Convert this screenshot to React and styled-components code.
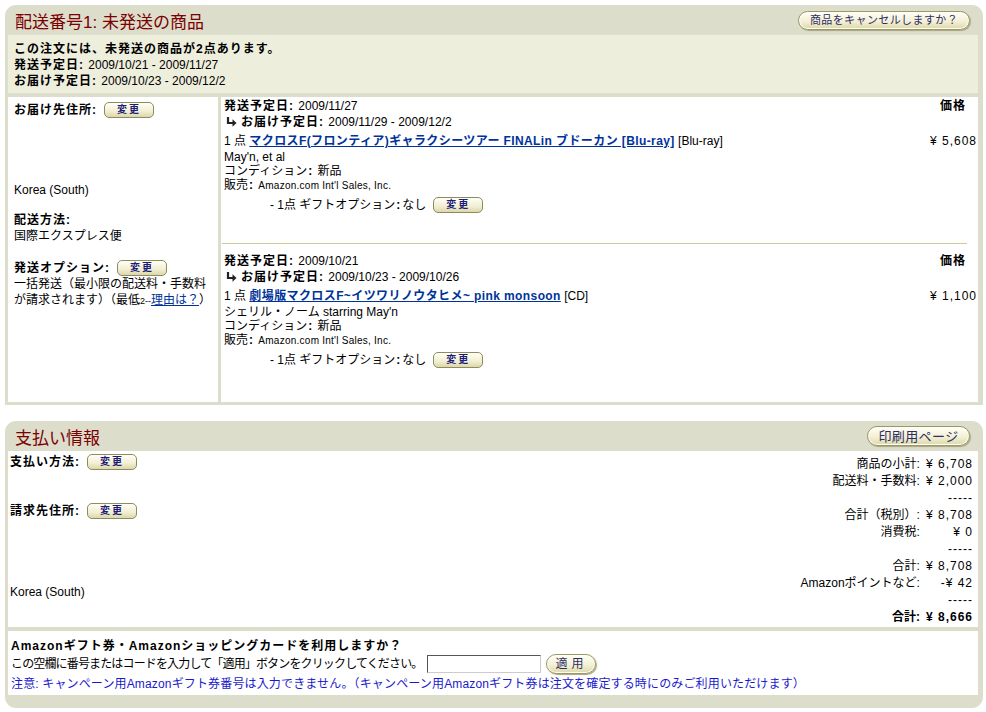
import React from "react";
import styled, { createGlobalStyle } from "styled-components";

const GlobalStyle = createGlobalStyle`
  body {
    margin: 0;
    background: #fff;
    font-family: "Liberation Sans", "Noto Sans CJK JP", sans-serif;
    font-size: 12px;
    color: #000;
  }
`;

const items = [
  {
    ship: "2009/11/27",
    deliver: "2009/11/29 - 2009/12/2",
    title: "マクロスF(フロンティア)ギャラクシーツアー FINALin ブドーカン [Blu-ray]",
    format: "[Blu-ray]",
    price: "¥ 5,608",
    artist: "May'n, et al",
  },
  {
    ship: "2009/10/21",
    deliver: "2009/10/23 - 2009/10/26",
    title: "劇場版マクロスF~イツワリノウタヒメ~ pink monsoon",
    format: "[CD]",
    price: "¥ 1,100",
    artist: "シェリル・ノーム starring May'n",
  },
];

const totals = [
  { label: "商品の小計:", value: "¥ 6,708" },
  { label: "配送料・手数料:", value: "¥ 2,000" },
  { label: "", value: "-----" },
  { label: "合計（税別）:", value: "¥ 8,708" },
  { label: "消費税:", value: "¥ 0" },
  { label: "", value: "-----" },
  { label: "合計:", value: "¥ 8,708" },
  { label: "Amazonポイントなど:", value: "-¥ 42" },
  { label: "", value: "-----" },
  { label: "合計:", value: "¥ 8,666", strong: true },
];

const Arrow = () => (
  <svg width="11" height="10" viewBox="0 0 11 10">
    <path d="M2 0v6h5" stroke="#222" strokeWidth="2.2" fill="none" />
    <path d="M6.5 2.2l4 3.8-4 3.8z" fill="#222" />
  </svg>
);

const App = () => {
  return (
    <>
      <GlobalStyle />
      <Page>
        <Panel>
          <PanelHeader>
            <PanelTitle>配送番号1: 未発送の商品</PanelTitle>
            <PillButton $w={172} $h={19} $fs={11}>
              商品をキャンセルしますか？
            </PillButton>
          </PanelHeader>
          <Info>
            <B>この注文には、未発送の商品が2点あります。</B>
            <div>
              <B>発送予定日: </B>2009/10/21 - 2009/11/27
            </div>
            <div>
              <B>お届け予定日: </B>2009/10/23 - 2009/12/2
            </div>
          </Info>
          <ShipBody>
            <LeftCol>
              <LabelRow>
                <B>お届け先住所:</B>
                <SmallButton>変更</SmallButton>
              </LabelRow>
              <Address>Korea (South)</Address>
              <Field $gap={14}>
                <B>配送方法:</B>
                <div>国際エクスプレス便</div>
              </Field>
              <Field $gap={16}>
                <LabelRow>
                  <B>発送オプション:</B>
                  <SmallButton>変更</SmallButton>
                </LabelRow>
                <NoWrap>一括発送（最小限の配送料・手数料</NoWrap>
                <NoWrap>
                  が請求されます）（最低<Tiny>2--</Tiny>
                  <PlainLink href="#">理由は？</PlainLink>）
                </NoWrap>
              </Field>
            </LeftCol>
            <RightCol>
              {items.map((item, i) => (
                <Item key={item.ship}>
                  {i > 0 && <Divider />}
                  <ItemHead>
                    <span>
                      <B>発送予定日: </B>
                      {item.ship}
                    </span>
                    <PriceHead>価格</PriceHead>
                  </ItemHead>
                  <DeliveryRow>
                    <Arrow />
                    <span>
                      <B>お届け予定日: </B>
                      {item.deliver}
                    </span>
                  </DeliveryRow>
                  <ProductRow>
                    <span>
                      1 点 <TitleLink href="#">{item.title}</TitleLink>{" "}
                      {item.format}
                    </span>
                    <Money>{item.price}</Money>
                  </ProductRow>
                  <Detail $first>{item.artist}</Detail>
                  <Detail>
                    コンディション<Colon>:</Colon> 新品
                  </Detail>
                  <Detail>
                    販売<Colon>:</Colon> <Seller>Amazon.com Int'l Sales, Inc.</Seller>
                  </Detail>
                  <GiftRow>
                    - 1点 ギフトオプション<Colon>:</Colon>なし
                    <SmallButton>変更</SmallButton>
                  </GiftRow>
                </Item>
              ))}
            </RightCol>
          </ShipBody>
        </Panel>

        <Panel $roundBottom>
          <PanelHeader>
            <PanelTitle>支払い情報</PanelTitle>
            <PillButton $w={103} $h={20} $fs={13}>
              印刷用ページ
            </PillButton>
          </PanelHeader>
          <PayBody>
            <PayLeft>
              <LabelRow>
                <B>支払い方法:</B>
                <SmallButton>変更</SmallButton>
              </LabelRow>
              <LabelRow $gap={33}>
                <B>請求先住所:</B>
                <SmallButton>変更</SmallButton>
              </LabelRow>
              <BillAddress>Korea (South)</BillAddress>
            </PayLeft>
            <Totals>
              {totals.map((t, i) => (
                <React.Fragment key={i}>
                  <TotalLabel $strong={t.strong}>{t.label}</TotalLabel>
                  <TotalValue $strong={t.strong}>{t.value}</TotalValue>
                </React.Fragment>
              ))}
            </Totals>
          </PayBody>
          <GiftBox>
            <B>Amazonギフト券・Amazonショッピングカードを利用しますか？</B>
            <CodeRow>
              <CodeText>
                この空欄に番号またはコードを入力して「適用」ボタンをクリックしてください。
              </CodeText>
              <CodeInput type="text" />
              <PillButton $w={50} $h={20} $fs={12} $spacing={4}>
                適用
              </PillButton>
            </CodeRow>
            <Note>
              注意: キャンペーン用Amazonギフト券番号は入力できません。（キャンペーン用Amazonギフト券は注文を確定する時にのみご利用いただけます）
            </Note>
          </GiftBox>
        </Panel>
      </Page>
    </>
  );
};

export default App;

/**
 *
 * STYLED COMPONENTS
 *
 **/
const Page = styled.div`
  width: 978px;
  padding: 5px 3px 4px 5px;
  display: flex;
  flex-direction: column;
  gap: 16px;
`;

const Panel = styled.section`
  background: #ddddcc;
  border-radius: ${(p) => (p.$roundBottom ? "11px" : "11px 11px 0 0")};
  padding: 0 5px ${(p) => (p.$roundBottom ? "13px" : "3px")} 3px;
`;

const PanelHeader = styled.div`
  height: 30px;
  display: flex;
  align-items: center;
  justify-content: space-between;
  padding: 0 8px 0 7px;
`;

const PanelTitle = styled.h2`
  margin: 0;
  font-size: 17px;
  font-weight: normal;
  color: #7b0000;
`;

const PillButton = styled.button`
  width: ${(p) => p.$w}px;
  height: ${(p) => p.$h}px;
  padding: 0;
  border: 1px solid #9a986a;
  border-radius: 11px;
  background: linear-gradient(#fffff6, #f3f0d6 55%, #ddd8aa);
  box-shadow: 1px 1px 1px #a9a67c, inset 0 0 0 1px #fffef2;
  font-family: inherit;
  font-size: ${(p) => p.$fs}px;
  letter-spacing: ${(p) => p.$spacing ?? 0.4}px;
  color: #2d2d66;
  line-height: 1;
  cursor: pointer;
`;

const SmallButton = styled.button`
  width: 50px;
  height: 16px;
  margin-left: 7px;
  padding: 0;
  border: 1px solid #8e8c5e;
  border-radius: 5px;
  background: linear-gradient(#fffff6, #f1eed2 60%, #dcd7aa);
  font-family: inherit;
  font-size: 10px;
  font-weight: bold;
  letter-spacing: 2px;
  line-height: 1;
  color: #1c1c7a;
  cursor: pointer;
`;

const B = styled.b`
  font-weight: bold;
  letter-spacing: 1px;
`;

const Colon = styled.b`
  font-weight: bold;
  padding: 0 2px 0 1px;
`;

const Info = styled.div`
  background: #eeeedd;
  padding: 6px 6px 4px;
  line-height: 16px;
  display: flex;
  flex-direction: column;
`;

const ShipBody = styled.div`
  margin-top: 4px;
  height: 305px;
  display: grid;
  grid-template-columns: 210px 1fr;
  column-gap: 3px;
`;

const LeftCol = styled.div`
  background: #fff;
  padding: 5px 6px 0;
  line-height: 16px;
`;

const LabelRow = styled.div`
  display: flex;
  align-items: center;
  height: 16px;
  margin-top: ${(p) => p.$gap || 0}px;
`;

const Address = styled.div`
  padding-top: 64px;
`;

const Field = styled.div`
  margin-top: ${(p) => p.$gap}px;
`;

const NoWrap = styled.div`
  white-space: nowrap;
`;

const Tiny = styled.span`
  font-size: 9px;
`;

const PlainLink = styled.a`
  color: #003399;
  text-decoration: underline;
`;

const RightCol = styled.div`
  background: #fff;
  padding: 1px 1px 0 3px;
  line-height: 16px;
`;

const Item = styled.div`
  display: flex;
  flex-direction: column;
`;

const Divider = styled.hr`
  margin: 28px 10px 9px -2px;
  border: 0;
  border-top: 1px solid #cccc99;
`;

const ItemHead = styled.div`
  display: flex;
  justify-content: space-between;
`;

const PriceHead = styled.b`
  font-weight: bold;
  letter-spacing: 1px;
  padding-right: 11px;
`;

const DeliveryRow = styled.div`
  display: flex;
  align-items: center;
  gap: 4px;
  padding-left: 2px;
`;

const ProductRow = styled.div`
  margin-top: 3px;
  display: flex;
  justify-content: space-between;
`;

const TitleLink = styled.a`
  color: #003399;
  font-weight: bold;
  letter-spacing: 0.4px;
  text-decoration: underline;
`;

const Money = styled.span`
  white-space: pre;
  letter-spacing: 1px;
`;

const Detail = styled.div`
  line-height: 14px;
  margin-top: ${(p) => (p.$first ? 1 : 0)}px;
`;

const Seller = styled.span`
  font-size: 10px;
  letter-spacing: 0.25px;
`;

const GiftRow = styled.div`
  margin-top: 2px;
  height: 20px;
  padding-left: 46px;
  display: flex;
  align-items: center;
  white-space: pre;
`;

const PayBody = styled.div`
  height: 176px;
  background: #fff;
  display: flex;
  justify-content: space-between;
`;

const PayLeft = styled.div`
  padding: 3px 0 0 2px;
  line-height: 16px;
`;

const BillAddress = styled.div`
  margin-top: 65px;
`;

const Totals = styled.div`
  align-self: flex-start;
  padding: 5px 5px 0 0;
  display: grid;
  grid-template-columns: auto auto;
  column-gap: 6px;
  line-height: 17px;
`;

const TotalLabel = styled.span`
  text-align: right;
  font-weight: ${(p) => (p.$strong ? "bold" : "normal")};
`;

const TotalValue = styled.span`
  text-align: right;
  white-space: pre;
  letter-spacing: 1px;
  font-weight: ${(p) => (p.$strong ? "bold" : "normal")};
`;

const GiftBox = styled.div`
  margin-top: 4px;
  height: 64px;
  box-sizing: border-box;
  background: #fff;
  padding: 7px 3px 0;
  line-height: 16px;
`;

const CodeRow = styled.div`
  height: 20px;
  display: flex;
  align-items: center;
  gap: 5px;
  white-space: nowrap;
`;

const CodeText = styled.span`
  letter-spacing: -0.85px;
`;

const CodeInput = styled.input`
  width: 114px;
  height: 18px;
  box-sizing: border-box;
  margin: 0;
  padding: 0 2px;
  border: 1px solid;
  border-color: #555 #ccc #ccc #555;
  background: #fff;
`;

const Note = styled.div`
  margin-top: 2px;
  color: #1a1acc;
  letter-spacing: 0.15px;
  white-space: nowrap;
`;
